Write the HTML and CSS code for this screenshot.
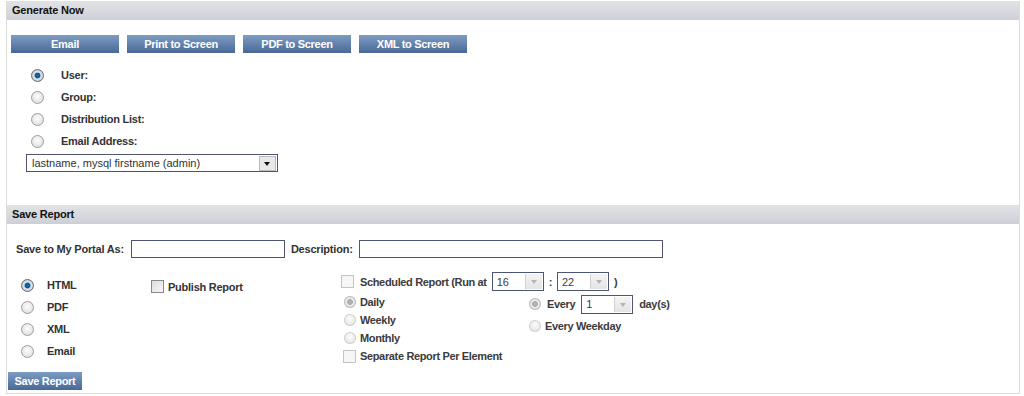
FILE: index.html
```html
<!DOCTYPE html>
<html lang="en">
<head>
    <meta charset="UTF-8">
    <title>Report Output</title>
    <link rel="stylesheet" href="styles.css">
</head>
<body>
    <div class="panel">
        <!-- Generate Now -->
        <div class="panel-head">Generate Now</div>
        <div class="panel-body generate">
            <div class="btn-row">
                <button class="btn wide">Email</button>
                <button class="btn wide">Print to Screen</button>
                <button class="btn wide">PDF to Screen</button>
                <button class="btn wide">XML to Screen</button>
            </div>
            <div class="target-list">
                <label class="target"><input type="radio" name="target" checked><span>User:</span></label>
                <label class="target"><input type="radio" name="target"><span>Group:</span></label>
                <label class="target"><input type="radio" name="target"><span>Distribution List:</span></label>
                <label class="target"><input type="radio" name="target"><span>Email Address:</span></label>
            </div>
            <div class="select big">
                <span class="select-text">lastname, mysql firstname (admin)</span>
                <span class="select-arrow dark"></span>
            </div>
        </div>

        <!-- Save Report -->
        <div class="panel-head">Save Report</div>
        <div class="panel-body save">
            <div class="name-row">
                <label>Save to My Portal As:</label>
                <input type="text" class="text-input portal-name">
                <label>Description:</label>
                <input type="text" class="text-input description">
            </div>
            <div class="options">
                <div class="format-list">
                    <label class="format"><input type="radio" name="format" checked><span>HTML</span></label>
                    <label class="format"><input type="radio" name="format"><span>PDF</span></label>
                    <label class="format"><input type="radio" name="format"><span>XML</span></label>
                    <label class="format"><input type="radio" name="format"><span>Email</span></label>
                </div>
                <div class="publish">
                    <label class="check"><span class="box"></span><span>Publish Report</span></label>
                </div>
                <div class="schedule">
                    <div class="run-at">
                        <span class="box off"></span>
                        <span>Scheduled Report (Run at</span>
                        <div class="select small"><span class="select-text">16</span><span class="select-arrow"></span></div>
                        <span>:</span>
                        <div class="select small"><span class="select-text">22</span><span class="select-arrow"></span></div>
                        <span>)</span>
                    </div>
                    <div class="repeat">
                        <div class="repeat-col">
                            <label class="sched"><span class="dot on"></span><span>Daily</span></label>
                            <label class="sched"><span class="dot"></span><span>Weekly</span></label>
                            <label class="sched"><span class="dot"></span><span>Monthly</span></label>
                        </div>
                        <div class="repeat-col days">
                            <label class="sched every"><span class="dot on"></span><span>Every</span>
                                <div class="select small"><span class="select-text">1</span><span class="select-arrow"></span></div>
                                <span>day(s)</span></label>
                            <label class="sched"><span class="dot"></span><span>Every Weekday</span></label>
                        </div>
                    </div>
                    <label class="sched separate"><span class="box off"></span><span>Separate Report Per Element</span></label>
                </div>
            </div>
            <button class="btn save-btn">Save Report</button>
        </div>
    </div>
</body>
</html>
```

FILE: styles.css
```css
body {
    margin: 0;
    font-family: "Liberation Sans", Arial, sans-serif;
    font-size: 11px;
    color: #333;
    background: #fff;
}
.panel {
    margin-left: 6px;
    width: 1012px;
    border: 1px solid #dcdcdc;
    border-top: none;
}
.panel-head {
    height: 19px;
    line-height: 19px;
    padding-left: 5px;
    margin-top: 1px;
    font-weight: bold;
    letter-spacing: -0.2px;
    color: #111;
    background: linear-gradient(#e2e3e5, #ccd0d6);
}
.panel-body.generate {
    padding: 15px 0 32px 4px;
}
.btn {
    font-family: inherit;
    font-size: 11px;
    font-weight: bold;
    letter-spacing: -0.3px;
    white-space: nowrap;
    color: #fff;
    border: none;
    height: 18px;
    padding: 0;
    background: linear-gradient(#7d9cc3, #4a6896);
    cursor: pointer;
}
.btn-row {
    display: flex;
    gap: 8px;
}
.btn.wide {
    width: 108px;
}
.target-list {
    display: flex;
    flex-direction: column;
    margin-top: 11px;
    padding-left: 20px;
}
.target, .format {
    display: flex;
    align-items: center;
    height: 22px;
    font-weight: bold;
    letter-spacing: -0.25px;
}
.target input {
    margin: 0 17px 0 0;
}
input[type=radio] {
    appearance: none;
    -webkit-appearance: none;
    width: 13px;
    height: 13px;
    border-radius: 50%;
    border: 1px solid #9c9c9c;
    background: radial-gradient(circle at 50% 40%, #fdfdfd, #d8d8d8);
    box-sizing: border-box;
}
input[type=radio]:checked {
    background: radial-gradient(circle, #1e6fb8 0, #0b4f8f 2.5px, #8fb8dc 3px, #e0e0e0 3.6px, #c9c9c9 6px);
    border-color: #6a6a6a;
}
.select {
    display: flex;
    align-items: center;
    border: 1px solid #4f5475;
    background: #fff;
    box-sizing: border-box;
}
.select.big {
    width: 252px;
    height: 18px;
    margin: 2px 0 0 15px;
}
.select-text {
    flex: 1;
    padding-left: 5px;
    font-weight: normal;
    letter-spacing: 0;
}
.select.small {
    width: 52px;
    height: 19px;
}
.select.small .select-text {
    padding-left: 4px;
}
.select-arrow {
    width: 16px;
    height: 15px;
    margin-right: 1px;
    border-left: 1px solid #d0d0d0;
    background: linear-gradient(#f4f4f4, #e4e4e4);
    position: relative;
}
.select-arrow::after {
    content: "";
    position: absolute;
    left: 5px;
    top: 6px;
    border: 3px solid transparent;
    border-top: 4px solid #b4b4b4;
    border-bottom: none;
}
.select-arrow.dark {
    border: 1px solid #bbb;
    background: #e8e8e8;
    width: 15px;
    height: 13px;
}
.select-arrow.dark::after {
    left: 4px;
    top: 5px;
    border-top-color: #111;
}
.panel-body.save {
    padding: 16px 0 3px 1px;
}
.name-row {
    display: flex;
    align-items: center;
    gap: 6px;
    padding-left: 8px;
    font-weight: bold;
    letter-spacing: -0.2px;
}
.name-row .portal-name {
    margin-left: 1px;
}
.text-input {
    height: 18px;
    box-sizing: border-box;
    border: 1px solid #4f5475;
    margin: 0;
}
.portal-name {
    width: 154px;
}
.description {
    width: 304px;
}
.options {
    display: flex;
    margin-top: 14px;
}
.format-list {
    display: flex;
    flex-direction: column;
    width: 130px;
    padding-left: 13px;
    margin-top: 2px;
}
.format input {
    margin: 0 13px 0 0;
}
.publish {
    width: 190px;
    padding-top: 8px;
    font-weight: bold;
    letter-spacing: -0.25px;
}
.check {
    display: flex;
    align-items: center;
    gap: 4px;
}
.box {
    width: 11px;
    height: 11px;
    border: 1px solid #8a8a8a;
    background: linear-gradient(135deg, #dcdcdc, #f8f8f8);
}
.box.off {
    border-color: #c4c4c4;
    background: #f6f6f6;
}
.schedule {
    font-weight: bold;
    letter-spacing: -0.35px;
    color: #3b3b3b;
}
.run-at {
    display: flex;
    align-items: center;
    gap: 5px;
}
.run-at .box {
    margin-right: 1px;
}
.repeat {
    display: flex;
    padding-left: 3px;
    margin-top: 2px;
}
.repeat-col {
    display: flex;
    flex-direction: column;
    width: 185px;
}
.sched {
    display: flex;
    align-items: center;
    gap: 4px;
    height: 18px;
}
.repeat-col.days .sched {
    height: 22px;
}
.sched.every {
    gap: 6px;
}
.dot {
    width: 12px;
    height: 12px;
    border-radius: 50%;
    background: radial-gradient(circle at 50% 40%, #fbfbfb, #dedede);
    box-shadow: inset 0 0 0 1px #d2d2d2;
}
.dot.on {
    background: radial-gradient(circle, #b9b9b9 0, #a8a8a8 2.5px, #f0f0f0 3.2px, #d4d4d4 6px);
    box-shadow: inset 0 0 0 1px #c0c0c0;
}
.separate {
    padding-left: 2px;
}
.save-btn {
    margin: 7px 0 0 0;
    width: 74px;
}
```
